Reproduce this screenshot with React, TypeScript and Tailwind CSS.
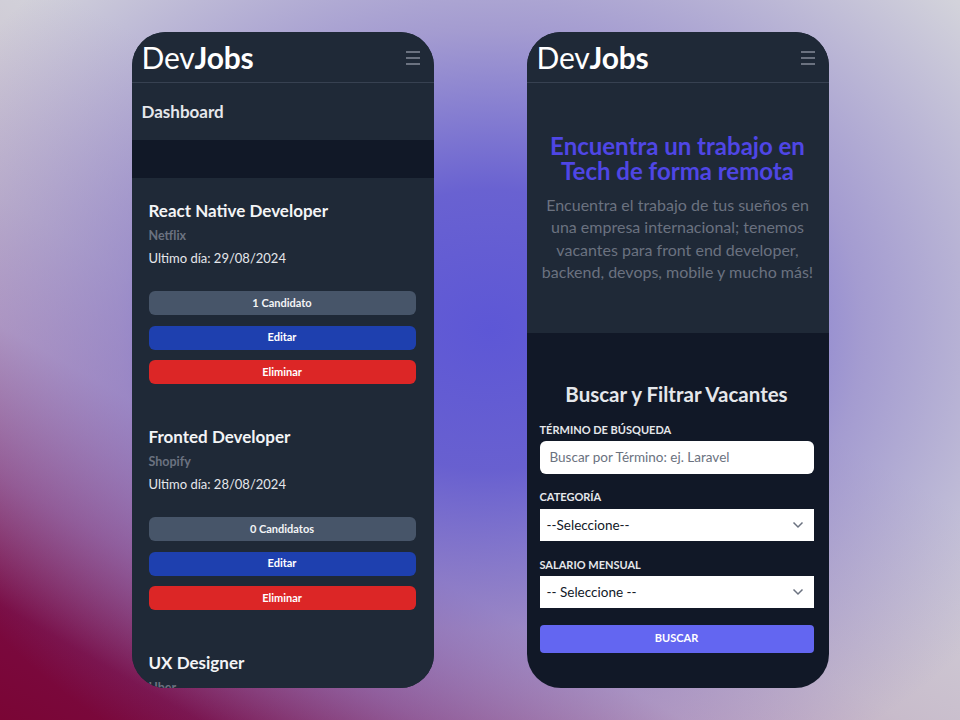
import React from "react";

const font = { fontFamily: "Lato, 'Noto Sans', sans-serif" };

function Header() {
  return (
    <div className="h-[51px] flex items-center justify-between pl-2.5 pr-3.5 border-b border-[#374151] bg-[#1f2937] shrink-0">
      <div className="text-[30px] leading-none text-white tracking-[-0.2px]">
        Dev<span className="font-bold">Jobs</span>
      </div>
      <div className="flex flex-col gap-[4.5px] pt-0.5">
        <span className="block w-[14px] h-[1.5px] bg-[#6b7280]" />
        <span className="block w-[14px] h-[1.5px] bg-[#6b7280]" />
        <span className="block w-[14px] h-[1.5px] bg-[#6b7280]" />
      </div>
    </div>
  );
}

function Phone({ children, bg }: { children: React.ReactNode; bg: string }) {
  return (
    <div className={`w-[302px] h-[656px] rounded-[34px] overflow-hidden flex flex-col ${bg}`}>
      <Header />
      {children}
    </div>
  );
}

const jobs = [
  { title: "React Native Developer", company: "Netflix", date: "29/08/2024", cand: "1 Candidato" },
  { title: "Fronted Developer", company: "Shopify", date: "28/08/2024", cand: "0 Candidatos" },
  { title: "UX Designer", company: "Uber", date: "27/08/2024", cand: "0 Candidatos" },
];

function JobCard({ job }: { job: (typeof jobs)[number] }) {
  return (
    <div className="pt-[21px] pb-[20px] pl-[17px] pr-[18px] bg-[#1f2937]">
      <div className="text-[17px] leading-6 font-bold text-[#f3f4f6]">{job.title}</div>
      <div className="mt-[5px] text-[12.5px] leading-4 font-bold text-[#6b7280]">{job.company}</div>
      <div className="mt-1 text-[13px] leading-5 text-[#e5e7eb]">Ultimo día: {job.date}</div>
      <div className="mt-[23px] flex flex-col gap-[10.5px]">
        <div className="h-6 rounded-md bg-[#475569] flex items-center justify-center text-[11px] font-bold text-[#f3f4f6]">
          {job.cand}
        </div>
        <div className="h-6 rounded-md bg-[#1e40af] flex items-center justify-center text-[11px] font-bold text-white">
          Editar
        </div>
        <div className="h-6 rounded-md bg-[#dc2626] flex items-center justify-center text-[11px] font-bold text-white">
          Eliminar
        </div>
      </div>
    </div>
  );
}

function Chevron() {
  return (
    <svg width="12" height="8" viewBox="0 0 12 8" fill="none" className="text-[#6b7280]">
      <path d="M1.5 1.5 L6 6 L10.5 1.5" stroke="currentColor" strokeWidth="1.5" />
    </svg>
  );
}

function SelectBox({ label }: { label: string }) {
  return (
    <div className="h-8 bg-white flex items-center justify-between pl-[7px] pr-[10px] text-[13.5px] text-[#111827]">
      <span>{label}</span>
      <Chevron />
    </div>
  );
}

export default function App() {
  return (
    <div
      style={font}
      className="w-[960px] h-[720px] flex items-center justify-center gap-[93px] bg-[radial-gradient(ellipse_620px_500px_at_490px_330px,#5d57d6_0%,rgba(96,88,208,0.92)_28%,rgba(125,110,200,0.55)_60%,rgba(180,170,210,0)_100%),linear-gradient(30deg,#7a0535_0%,#7a0a40_9%,#9a5585_19%,#bfa5c0_31%,#c8bccb_41%,#d3d3db_60%,#d3d3db_100%)]"
    >
      <Phone bg="bg-[#1f2937]">
        <div className="h-[57px] shrink-0 flex items-center px-2.5 bg-[#1f2937]">
          <span className="text-[17px] font-bold text-[#e5e7eb]">Dashboard</span>
        </div>
        <div className="h-[38px] shrink-0 bg-[#111827]" />
        <div className="flex flex-col">
          {jobs.map((j) => (
            <JobCard key={j.title} job={j} />
          ))}
        </div>
      </Phone>

      <Phone bg="bg-[#111827]">
        <div className="bg-[#1f2937] pt-[50px] pb-[49px] px-3 text-center shrink-0">
          <h1 className="text-[24px] leading-[25px] font-bold text-[#4f46e5]">
            Encuentra un trabajo en
            <br />
            Tech de forma remota
          </h1>
          <p className="mt-[11px] text-[16px] leading-[22.4px] text-[#6b7280]">
            Encuentra el trabajo de tus sueños en una empresa internacional; tenemos vacantes para front end
            developer, backend, devops, mobile y mucho más!
          </p>
        </div>
        <div className="bg-[#111827] pl-[13px] pr-[15px] pt-[47px]">
          <h2 className="text-center text-[20.5px] leading-7 font-bold text-[#e5e7eb]">Buscar y Filtrar Vacantes</h2>
          <div className="mt-[14px] text-[11px] leading-4 font-bold text-[#e5e7eb] uppercase">Término de búsqueda</div>
          <div className="mt-[3px] h-[33px] rounded-md bg-white flex items-center px-2.5 text-[13.5px] text-[#6b7280]">
            Buscar por Término: ej. Laravel
          </div>
          <div className="mt-[15px] text-[11px] leading-4 font-bold text-[#e5e7eb] uppercase">Categoría</div>
          <div className="mt-[4px]">
            <SelectBox label="--Seleccione--" />
          </div>
          <div className="mt-[16px] text-[11px] leading-4 font-bold text-[#e5e7eb] uppercase">Salario mensual</div>
          <div className="mt-[3px]">
            <SelectBox label="-- Seleccione --" />
          </div>
          <div className="mt-[17px] h-[28px] rounded bg-[#6366f1] flex items-center justify-center text-[11px] font-bold text-white uppercase">
            Buscar
          </div>
        </div>
      </Phone>
    </div>
  );
}
